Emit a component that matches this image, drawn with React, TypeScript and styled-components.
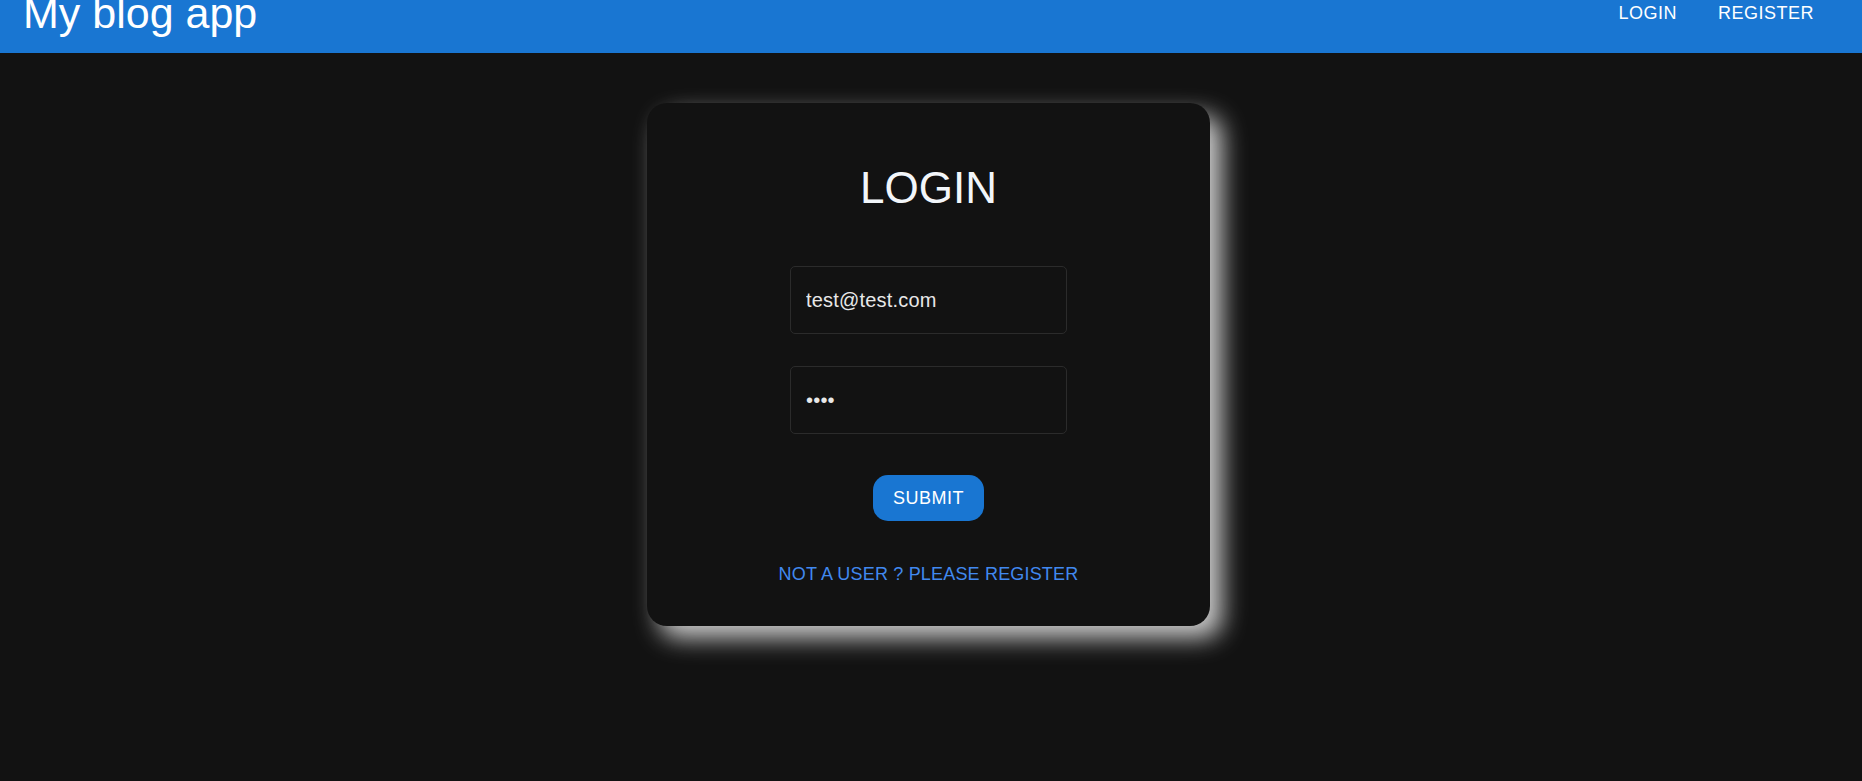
import React from "react";
import styled, { createGlobalStyle } from "styled-components";

const GlobalStyle = createGlobalStyle`
  html, body {
    margin: 0;
    padding: 0;
    background: #121212;
    font-family: "Liberation Sans", Arial, sans-serif;
  }
  * { box-sizing: border-box; }
`;

const Page = styled.div`
  min-height: 781px;
  background: #121212;
`;

const Header = styled.header`
  height: 53px;
  background: #1976d2;
  display: flex;
  align-items: flex-start;
  justify-content: space-between;
  padding: 0 48px 0 23px;
  overflow: hidden;
`;

const Brand = styled.h1`
  margin: 0;
  font-size: 43px;
  font-weight: 400;
  line-height: 26px;
  color: #ffffff;
  white-space: nowrap;
`;

const Nav = styled.nav`
  display: flex;
  gap: 41px;
  padding-top: 3px;
`;

const NavLink = styled.a`
  font-size: 18px;
  line-height: 20px;
  letter-spacing: 0.5px;
  color: #ffffff;
  text-decoration: none;
  text-transform: uppercase;
  cursor: pointer;
`;

const Main = styled.main`
  padding: 50px 5px 0 0;
`;

const Card = styled.form`
  width: 563px;
  margin: 0 auto;
  padding: 30px;
  background: #121212;
  border-radius: 20px;
  box-shadow: 12px 12px 25px #cccccc;
  display: flex;
  flex-direction: column;
  align-items: center;
`;

const Title = styled.h2`
  margin: 29px 0 52px;
  font-size: 44px;
  font-weight: 400;
  line-height: 52px;
  color: #f2f6fa;
`;

const Field = styled.input<{ $gap: number }>`
  width: 277px;
  height: 68px;
  margin: 0 0 ${(p) => p.$gap}px;
  padding: 0 15px;
  background: transparent;
  border: 1px solid #2b2b2b;
  border-radius: 5px;
  font-family: "Liberation Sans", Arial, sans-serif;
  font-size: 20px;
  letter-spacing: 0.19px;
  color: #e8e8e8;
  outline: none;
`;

const SubmitButton = styled.button`
  height: 46px;
  padding: 0 20px;
  border: none;
  border-radius: 15px;
  background: #1976d2;
  color: #ffffff;
  font-family: "Liberation Sans", Arial, sans-serif;
  font-size: 18px;
  letter-spacing: 0.5px;
  text-transform: uppercase;
  cursor: pointer;
`;

const SwitchLink = styled.a`
  margin: 43px 0 12px;
  font-size: 18px;
  line-height: 20px;
  letter-spacing: 0.18px;
  color: #4189ef;
  text-transform: uppercase;
  text-decoration: none;
  cursor: pointer;
`;

export default function App() {
  return (
    <>
      <GlobalStyle />
      <Page>
        <Header>
          <Brand>My blog app</Brand>
          <Nav>
            <NavLink>Login</NavLink>
            <NavLink>Register</NavLink>
          </Nav>
        </Header>
        <Main>
          <Card onSubmit={(e) => e.preventDefault()}>
            <Title>LOGIN</Title>
            <Field $gap={32} type="email" name="email" defaultValue="test@test.com" />
            <Field $gap={41} type="password" name="password" defaultValue="test" />
            <SubmitButton type="submit">Submit</SubmitButton>
            <SwitchLink>Not a user ? Please register</SwitchLink>
          </Card>
        </Main>
      </Page>
    </>
  );
}
